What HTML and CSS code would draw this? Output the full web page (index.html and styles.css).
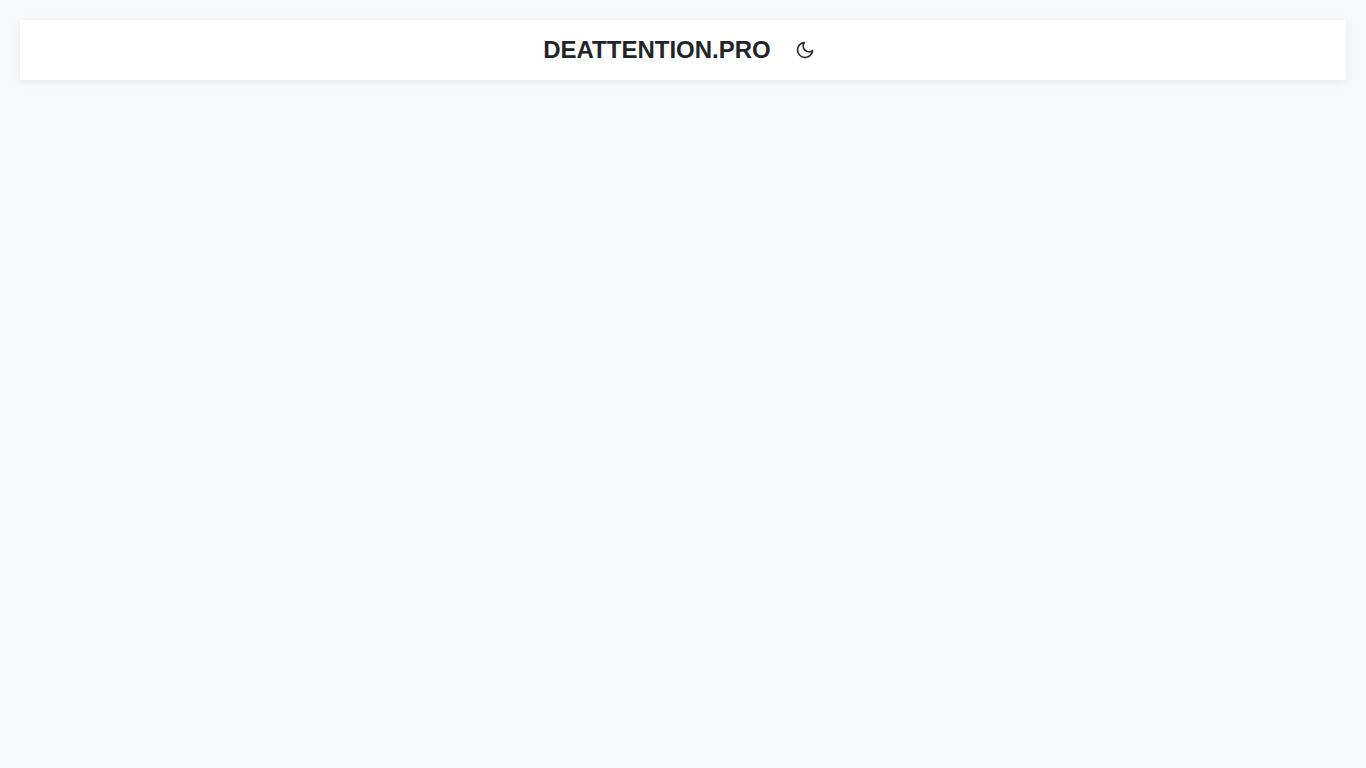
FILE: index.html
```html
<!DOCTYPE html>
<html lang="en">
<head>
    <meta charset="UTF-8">
    <meta name="viewport" content="width=device-width, initial-scale=1.0">
    <title>DEATTENTION.PRO</title>
    <link rel="stylesheet" href="styles.css">
</head>
<body>

    <header class="header">
        <h1 class="logo">DEATTENTION.PRO</h1>
        <button class="theme-toggle" type="button" aria-label="Toggle theme" onclick="toggleTheme()">
            <svg width="20" height="20" viewBox="0 0 24 24" fill="none" stroke="currentColor" stroke-width="2" stroke-linecap="round" stroke-linejoin="round">
                <path d="M21 12.79A9 9 0 1 1 11.21 3 7 7 0 0 0 21 12.79z"/>
            </svg>
        </button>
    </header>

    <script>
        function toggleTheme() {
            document.body.classList.toggle('dark');
        }
    </script>

</body>
</html>
```
FILE: styles.css
```css
* {
    margin: 0;
    padding: 0;
    box-sizing: border-box;
}
body {
    font-family: "Liberation Sans", Arial, sans-serif;
    background: #f8f9fb;
    color: #212529;
    min-height: 100vh;
    padding: 20px;
}
.header {
    display: flex;
    justify-content: center;
    align-items: center;
    gap: 16px;
    padding: 12px 20px;
    background: #fff;
    box-shadow: 0 2px 8px rgba(0, 0, 0, 0.08);
}
.logo {
    font-size: 24px;
    font-weight: bold;
}
.theme-toggle {
    display: flex;
    padding: 8px;
    border: none;
    background: none;
    color: inherit;
    cursor: pointer;
}
body.dark {
    background: #16181d;
    color: #f8f9fb;
}
.dark .header {
    background: #212529;
}
```
